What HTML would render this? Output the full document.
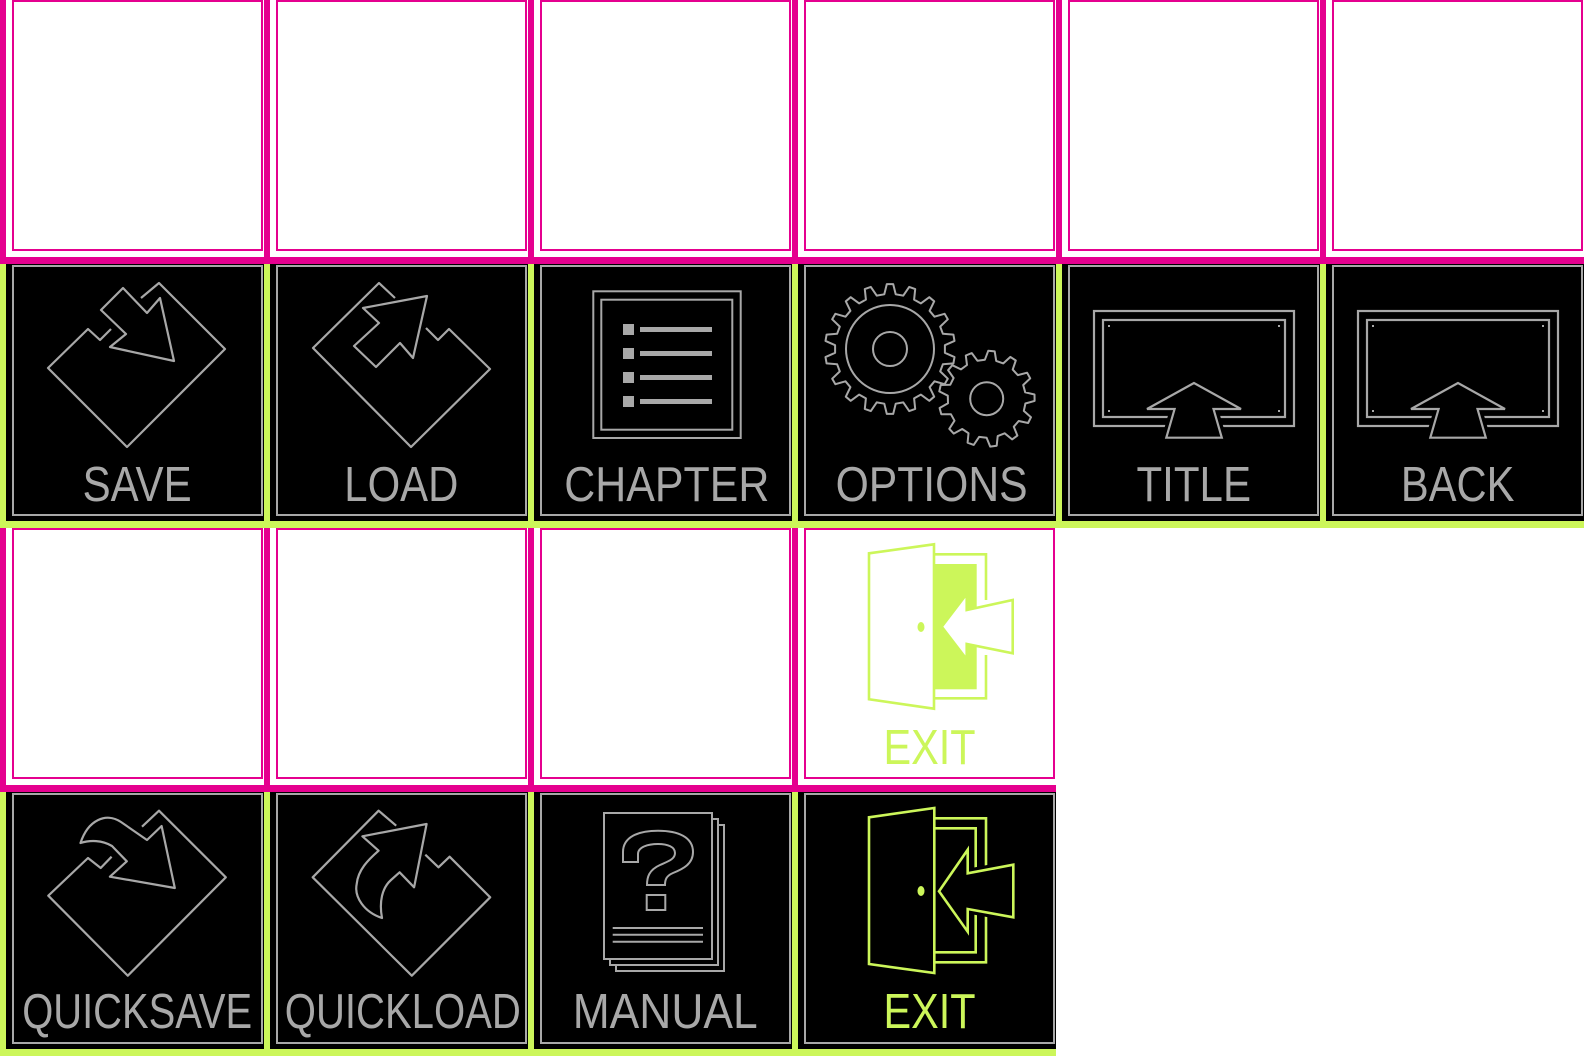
<!DOCTYPE html>
<html><head><meta charset="utf-8"><style>
html,body{margin:0;padding:0;background:#fff;width:1584px;height:1056px;overflow:hidden}
svg{display:block}
text{font-family:"Liberation Sans",sans-serif;font-size:49px}
</style></head><body>
<svg id="s" width="1584" height="1056" viewBox="0 0 1584 1056" xmlns="http://www.w3.org/2000/svg">
<defs>
<g id="pinkcell">
<rect x="0" y="0" width="264" height="264" fill="#fff"/>
<rect x="0" y="0" width="6" height="264" fill="#e5008f"/>
<rect x="0" y="257" width="264" height="7" fill="#e5008f"/>
<rect x="13" y="1" width="249" height="249" fill="none" stroke="#e5008f" stroke-width="2"/>
</g>
<g id="greencell">
<rect x="0" y="0" width="264" height="264" fill="#000"/>
<rect x="0" y="0" width="6" height="264" fill="#ccf65a"/>
<rect x="0" y="257" width="264" height="7" fill="#ccf65a"/>
<rect x="13" y="2" width="249" height="249" fill="none" stroke="#a8a8a8" stroke-width="2"/>
</g>
<g id="monitor" fill="none" stroke="#a8a8a8" stroke-width="2.2">
<rect x="38" y="47" width="200" height="115"/>
<rect x="47" y="56" width="182" height="97"/>
<g fill="#a8a8a8" stroke="none">
<rect x="52" y="61" width="2" height="2"/><rect x="222" y="61" width="2" height="2"/>
<rect x="52" y="146" width="2" height="2"/><rect x="222" y="146" width="2" height="2"/>
</g>
<polygon points="138,119 91,145 118.6,145 110.3,173.7 165.8,173.7 157.5,145 185,145" stroke="#000" stroke-width="9" fill="#000"/>
<polygon points="138,119 91,145 118.6,145 110.3,173.7 165.8,173.7 157.5,145 185,145"/>
</g>
</defs>

<use href="#pinkcell" x="0" y="0"/><use href="#pinkcell" x="264" y="0"/><use href="#pinkcell" x="528" y="0"/>
<use href="#pinkcell" x="792" y="0"/><use href="#pinkcell" x="1056" y="0"/><use href="#pinkcell" x="1320" y="0"/>
<use href="#greencell" x="0" y="264"/><use href="#greencell" x="264" y="264"/><use href="#greencell" x="528" y="264"/>
<use href="#greencell" x="792" y="264"/><use href="#greencell" x="1056" y="264"/><use href="#greencell" x="1320" y="264"/>
<use href="#pinkcell" x="0" y="528"/><use href="#pinkcell" x="264" y="528"/><use href="#pinkcell" x="528" y="528"/><use href="#pinkcell" x="792" y="528"/>
<use href="#greencell" x="0" y="792"/><use href="#greencell" x="264" y="792"/><use href="#greencell" x="528" y="792"/><use href="#greencell" x="792" y="792"/>

<g transform="translate(0,264)" fill="none" stroke="#a8a8a8" stroke-width="2.2" stroke-linejoin="round">
<path d="M111,65 L100,76 L88,65 L48,104 L127,183 L225,85 L159,19 L141,34"/>
<path d="M101,46 L123,24 L147,49 L160,34 L174,97 L110,83 L126,70 Z"/>
<text x="82.6" y="237" textLength="109" lengthAdjust="spacingAndGlyphs" fill="#a8a8a8" stroke="none">SAVE</text>
</g>
<g transform="translate(264,264)" fill="none" stroke="#a8a8a8" stroke-width="2.2" stroke-linejoin="round">
<path d="M131,34 L115,19 L49,84 L147,183 L226,105 L185,65 L174,76 L162,64"/>
<path d="M99,44 L163,32 L149,94 L136,79 L112,103 L90,82 L115,59 Z"/>
<text x="80.3" y="237" textLength="114" lengthAdjust="spacingAndGlyphs" fill="#a8a8a8" stroke="none">LOAD</text>
</g>
<g transform="translate(528,264)" fill="none" stroke="#a8a8a8" stroke-width="2">
<rect x="65.3" y="27.3" width="147.4" height="146.7"/>
<rect x="73.3" y="35.7" width="131" height="130"/>
<g fill="#a8a8a8" stroke="none">
<rect x="95" y="60" width="11" height="11"/><rect x="112" y="63" width="72" height="5"/>
<rect x="95" y="84" width="11" height="11"/><rect x="112" y="87" width="72" height="5"/>
<rect x="95" y="108" width="11" height="11"/><rect x="112" y="111" width="72" height="5"/>
<rect x="95" y="132" width="11" height="11"/><rect x="112" y="135" width="72" height="5"/>
</g>
<text x="36.3" y="237" textLength="205" lengthAdjust="spacingAndGlyphs" fill="#a8a8a8" stroke="none">CHAPTER</text>
</g>
<g transform="translate(792,264)" fill="#000" stroke="#a8a8a8" stroke-width="2" stroke-linejoin="round">
<path id="g2" d=""/>
<circle cx="194.7" cy="134.7" r="16.5" fill="none"/>
<path id="g1" d=""/>
<circle cx="98" cy="85" r="44" fill="none"/>
<circle cx="98" cy="85" r="17" fill="none"/>
<text x="43.6" y="237" textLength="192" lengthAdjust="spacingAndGlyphs" fill="#a8a8a8" stroke="none">OPTIONS</text>
</g>
<g transform="translate(1056,264)">
<use href="#monitor"/>
<text x="80.5" y="237" textLength="114.5" lengthAdjust="spacingAndGlyphs" fill="#a8a8a8">TITLE</text>
</g>
<g transform="translate(1320,264)">
<use href="#monitor"/>
<text x="80.9" y="237" textLength="113.5" lengthAdjust="spacingAndGlyphs" fill="#a8a8a8">BACK</text>
</g>

<g transform="translate(792,528)" fill="none" stroke="#ccf65a" stroke-width="2.6">
<path d="M142,26.3 L194,26.3 L194,72 M194,127 L194,170.3 L142,170.3"/>
<rect x="142" y="36" width="42.7" height="125.3" fill="#ccf65a" stroke="none"/>
<polygon points="149.7,98.7 174.7,66 174.7,82 220.7,72 220.7,125.3 174.7,116 174.7,131.3" fill="#fff"/>
<polygon points="77,25.3 142,16.3 142,180.7 77,171.3" fill="#fff"/>
<ellipse cx="129" cy="99" rx="3.5" ry="5" fill="#ccf65a" stroke="none"/>
<text x="91.5" y="236" textLength="92" lengthAdjust="spacingAndGlyphs" fill="#ccf65a" stroke="none">EXIT</text>
</g>

<g transform="translate(0,792)" fill="none" stroke="#a8a8a8" stroke-width="2.2" stroke-linejoin="round">
<path d="M111.6,64.7 L100.7,76 L88,66 L48.3,103.7 L127.8,183.7 L225.8,85.3 L159,18.7 L142,34.7"/>
<path d="M80.5,59 C88,36 106,28 121,38 L147,56 L161.6,42 L174.8,104 L109.9,92.7 L126.8,77.3 L112,62 C102,56 90,56 80.5,59 Z" transform="translate(0,-8)"/>
<text x="22.2" y="236" textLength="230" lengthAdjust="spacingAndGlyphs" fill="#a8a8a8" stroke="none">QUICKSAVE</text>
</g>
<g transform="translate(264,792)" fill="none" stroke="#a8a8a8" stroke-width="2.2" stroke-linejoin="round">
<path d="M132.2,33.7 L114.6,18.7 L48.7,85.3 L147.8,183.7 L226.2,105.3 L185.6,64.7 L174.5,75.3 L161.3,62.7"/>
<path d="M98.4,44.3 L162.6,32 L150.1,95.3 L135.6,80.3 L127,88 C118,96 115,110 118,126 C100,120 90,105 92.7,92 C94,78 104,68 114.6,58.7 Z"/>
<text x="20.8" y="236" textLength="236" lengthAdjust="spacingAndGlyphs" fill="#a8a8a8" stroke="none">QUICKLOAD</text>
</g>
<g transform="translate(528,792)" fill="#000" stroke="#a8a8a8" stroke-width="2">
<rect x="88" y="33" width="108" height="146"/>
<rect x="82" y="27" width="108" height="146"/>
<rect x="76" y="21" width="108" height="146"/>
<path d="M84.7,136 H175 M84.7,142.7 H175 M84.7,149.7 H175" fill="none"/>
<path d="M95,70 L95,60 C95,45 110,38.7 130,38.7 C150,38.7 165,45 165,60 C165,72 155,77 145,81 C138,84 137,88 137,93 L119,93 C119,85 121,78 132,73 C141,69 147,67 147,61 C147,55 140,52 130,52 C120,52 110,55 110,62 L110,70 Z" fill="none"/>
<rect x="118.7" y="103" width="18.6" height="15" fill="none"/>
<text x="44.7" y="236" textLength="185" lengthAdjust="spacingAndGlyphs" fill="#a8a8a8" stroke="none">MANUAL</text>
</g>
<g transform="translate(792,792)" fill="none" stroke="#ccf65a" stroke-width="2.6">
<path d="M142,26.3 L194,26.3 L194,170.3 L142,170.3"/>
<path d="M142,36.3 L183.7,36.3 L183.7,160.3 L142,160.3"/>
<polygon points="147,99.3 175.7,57.7 175.7,81.3 221.3,72.7 221.3,125.3 175.7,117 175.7,139.7" fill="#000" stroke="#000" stroke-width="9"/>
<polygon points="147,99.3 175.7,57.7 175.7,81.3 221.3,72.7 221.3,125.3 175.7,117 175.7,139.7" fill="#000"/>
<polygon points="77,25.3 142.3,16 142.3,181 77,172" fill="#000"/>
<ellipse cx="129" cy="99" rx="3.5" ry="5" fill="#ccf65a" stroke="none"/>
<text x="91.5" y="236" textLength="92" lengthAdjust="spacingAndGlyphs" fill="#ccf65a" stroke="none">EXIT</text>
</g>
</svg>
<script>
function gear(cx,cy,N,rt,rr,rot){var p=2*Math.PI/N,d="";for(var i=0;i<N;i++){var a=i*p+rot;
var pts=[[rr,a-0.3*p],[rt,a-0.14*p],[rt,a+0.14*p],[rr,a+0.3*p]];
for(var j=0;j<4;j++){var x=cx+pts[j][0]*Math.cos(pts[j][1]),y=cy+pts[j][0]*Math.sin(pts[j][1]);d+=(i==0&&j==0?"M":"L")+x.toFixed(1)+","+y.toFixed(1)+" ";}}
return d+"Z";}
document.getElementById("g1").setAttribute("d",gear(98,85,18,65,55,-Math.PI/2));
document.getElementById("g2").setAttribute("d",gear(194.7,134.7,13,48,39,-Math.PI/2+0.1));
</script>
</body></html>
